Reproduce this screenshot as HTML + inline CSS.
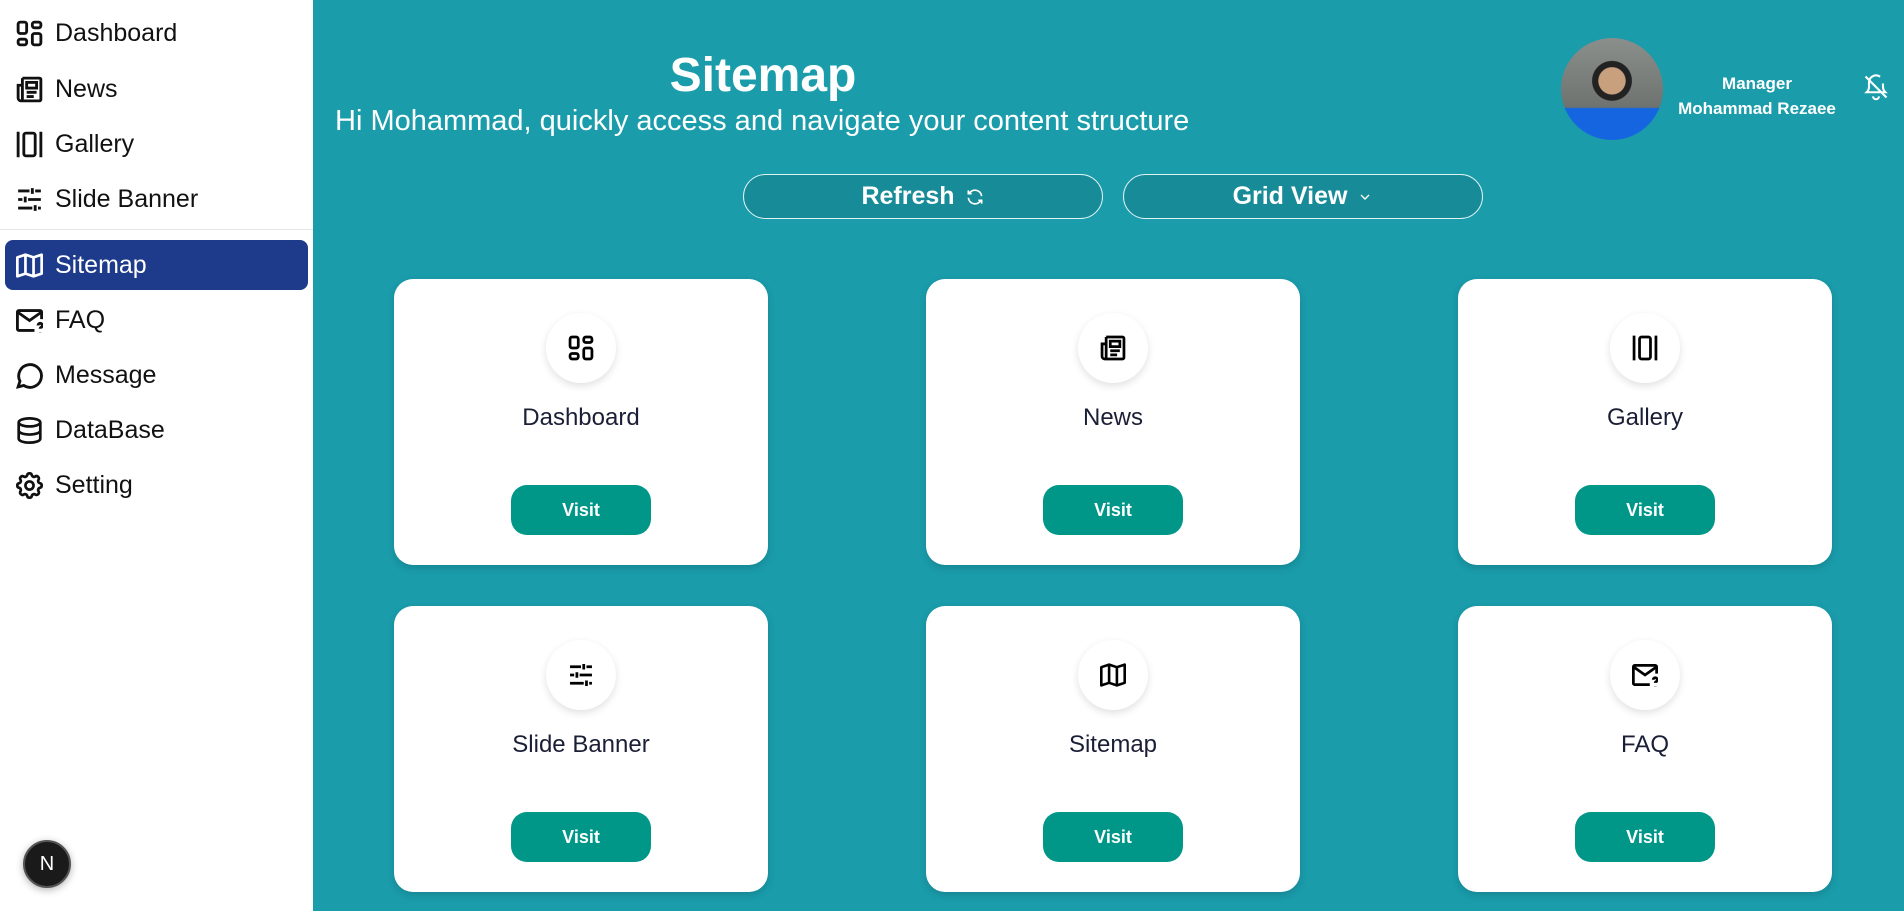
<!DOCTYPE html>
<html><head><meta charset="utf-8">
<style>
*{box-sizing:border-box;margin:0;padding:0}
body{width:1904px;height:911px;overflow:hidden;font-family:"Liberation Sans",sans-serif;background:#1a9cab;position:relative}
.side{position:absolute;left:0;top:0;width:313px;height:911px;background:#fff}
.item{position:absolute;left:5px;width:303px;height:50px;display:flex;align-items:center;padding-left:11px;font-size:25px;color:#111}
.item svg{width:27px;height:27px;margin-right:12px;flex:none}
.item.act{background:#1e3a8a;color:#fff;border-radius:8px}
.div{position:absolute;left:0;top:229px;width:313px;height:1px;background:#e5e5e5}
.nb{position:absolute;left:23px;top:840px;width:48px;height:48px;border-radius:50%;background:#1a1a1a;border:2px solid #555;color:#fff;font-size:20px;display:flex;align-items:center;justify-content:center;box-shadow:0 2px 8px rgba(0,0,0,.3)}
.h1{position:absolute;left:563px;width:400px;top:48px;text-align:center;color:#fff;font-size:48px;font-weight:bold}
.sub{position:absolute;left:335px;top:105px;color:#fff;font-size:29px}
.btn{position:absolute;top:174px;width:360px;height:45px;border:1px solid #e0f4f6;border-radius:23px;background:#188b98;color:#fff;font-size:25px;font-weight:bold;display:flex;align-items:center;justify-content:center;gap:10px}
.av{position:absolute;left:1561px;top:38px;width:102px;height:102px;border-radius:50%;background:radial-gradient(circle at 50% 42%,#c9a07e 0 17%,#222 18% 25%,transparent 26%),linear-gradient(#8a8f8c,#6e7370 68%,#1565e0 69%);overflow:hidden}
.mg{position:absolute;left:1650px;width:214px;text-align:center;color:#fff;font-size:17px;font-weight:bold}
.card{position:absolute;width:374px;height:286px;background:#fff;border-radius:19px;box-shadow:0 3px 8px rgba(0,0,0,.15)}
.ic{position:absolute;left:152px;top:34px;width:70px;height:70px;border-radius:50%;background:#fff;box-shadow:0 3px 8px rgba(0,0,0,.12);display:flex;align-items:center;justify-content:center}
.ic svg{width:26px;height:26px}
.t{position:absolute;top:125px;width:100%;text-align:center;font-size:24px;color:#1a1f36}
.v{position:absolute;left:117px;top:206px;width:140px;height:50px;border-radius:16px;background:#009688;color:#fff;font-size:18px;font-weight:bold;display:flex;align-items:center;justify-content:center}
</style></head><body>
<svg width="0" height="0" style="position:absolute">
<defs>
<g id="dash" fill="none" stroke="currentColor" stroke-width="2"><rect x="4" y="4" width="6" height="8" rx="1.5"/><rect x="14" y="4" width="6" height="4" rx="1.5"/><rect x="4" y="16" width="6" height="4" rx="1.5"/><rect x="14" y="12" width="6" height="8" rx="1.5"/></g>
<g id="news" fill="none" stroke="currentColor" stroke-width="2"><path d="M7 4h12a1 1 0 0 1 1 1v14a1 1 0 0 1-1 1H6a2 2 0 0 1-2-2V9h3M7 4v15a1 1 0 0 1-2 0"/><rect x="10" y="7" width="7" height="4"/><path d="M10 14h7M10 17h5"/></g>
<g id="gal" fill="none" stroke="currentColor" stroke-width="2"><path d="M4 3v18M20 3v18"/><rect x="8" y="4" width="8" height="16" rx="1.5"/></g>
<g id="slid" fill="none" stroke="currentColor" stroke-width="2"><path d="M4 6h8M16 6h4M14 4v4M4 12h3M11 12h9M9 10v4M4 18h10M18 18h2M16 16v4"/></g>
<g id="map" fill="none" stroke="currentColor" stroke-width="2" stroke-linejoin="round"><path d="M3 6l6-2 6 2 6-2v14l-6 2-6-2-6 2z M9 4v14M15 6v14"/></g>
<g id="faq" fill="none" stroke="currentColor" stroke-width="2"><path d="M20 11V6a1 1 0 0 0-1-1H4a1 1 0 0 0-1 1v12a1 1 0 0 0 1 1h11"/><path d="M3 6l8.5 6L20 6"/><path d="M17.5 15.5a1.5 1.5 0 1 1 2 1.4c-.4.2-.5.5-.5.9M19 20.5v.2"/></g>
<g id="msg" fill="none" stroke="currentColor" stroke-width="2"><path d="M4 20l1.3-4A8 8 0 1 1 8 19z"/></g>
<g id="db" fill="none" stroke="currentColor" stroke-width="2"><ellipse cx="12" cy="6" rx="8" ry="3"/><path d="M4 6v12c0 1.7 3.6 3 8 3s8-1.3 8-3V6M4 12c0 1.7 3.6 3 8 3s8-1.3 8-3"/></g>
<g id="set" fill="none" stroke="currentColor" stroke-width="2"><path d="M10.3 4.3c.4-1.8 3-1.8 3.4 0a1.7 1.7 0 0 0 2.6 1c1.5-.9 3.3.8 2.4 2.4a1.7 1.7 0 0 0 1 2.6c1.8.4 1.8 3 0 3.4a1.7 1.7 0 0 0-1 2.6c.9 1.5-.8 3.3-2.4 2.4a1.7 1.7 0 0 0-2.6 1c-.4 1.8-3 1.8-3.4 0a1.7 1.7 0 0 0-2.6-1c-1.5.9-3.3-.8-2.4-2.4a1.7 1.7 0 0 0-1-2.6c-1.8-.4-1.8-3 0-3.4a1.7 1.7 0 0 0 1-2.6c-.9-1.5.8-3.3 2.4-2.4a1.7 1.7 0 0 0 2.6-1z"/><circle cx="12" cy="12" r="3"/></g>
</defs></svg>
<div class="side">
<div class="item" style="top:8px"><svg viewBox="2.5 2.5 19 19"><use href="#dash"/></svg>Dashboard</div>
<div class="item" style="top:64px"><svg viewBox="2.5 2.5 19 19"><use href="#news"/></svg>News</div>
<div class="item" style="top:119px"><svg viewBox="2.5 2.5 19 19"><use href="#gal"/></svg>Gallery</div>
<div class="item" style="top:174px"><svg viewBox="2.5 2.5 19 19"><use href="#slid"/></svg>Slide Banner</div>
<div class="div"></div>
<div class="item act" style="top:240px"><svg viewBox="2 2.5 20 19"><use href="#map"/></svg>Sitemap</div>
<div class="item" style="top:295px"><svg viewBox="2 2.5 19 19"><use href="#faq"/></svg>FAQ</div>
<div class="item" style="top:350px"><svg viewBox="2.5 2.5 19 19"><use href="#msg"/></svg>Message</div>
<div class="item" style="top:405px"><svg viewBox="2.5 2 19 20"><use href="#db"/></svg>DataBase</div>
<div class="item" style="top:460px"><svg viewBox="2 2 20 20"><use href="#set"/></svg>Setting</div>
<div class="nb">N</div>
</div>
<div class="h1">Sitemap</div>
<div class="sub">Hi Mohammad, quickly access and navigate your content structure</div>
<div class="btn" style="left:743px">Refresh <svg width="20" height="20" viewBox="0 0 24 24" fill="none" stroke="#fff" stroke-width="2"><path d="M20 11A8 8 0 0 0 5 8M4 4v4h4M4 13a8 8 0 0 0 15 3M20 20v-4h-4"/></svg></div>
<div class="btn" style="left:1123px">Grid View <svg width="16" height="16" viewBox="0 0 24 24" fill="none" stroke="#fff" stroke-width="2"><path d="M6 9l6 6 6-6"/></svg></div>
<div class="av"></div>
<div class="mg" style="top:74px">Manager</div>
<div class="mg" style="top:99px">Mohammad Rezaee</div>
<svg style="position:absolute;left:1862px;top:73px" width="28" height="28" viewBox="0 0 24 24" fill="none" stroke="#fff" stroke-width="1.8"><path d="M9.5 20a2.5 2.5 0 0 0 5 0M6 8a6 6 0 0 1 9.5-4.8M18 9v3c0 2 1 3.5 2 4.5H8M6 8v4c0 2-1 3.5-2 4.5h4M3 3l18 18"/></svg>

<div class="card" style="left:394px;top:279px"><div class="ic"><svg viewBox="2.5 2.5 19 19"><use href="#dash"/></svg></div><div class="t">Dashboard</div><div class="v">Visit</div></div>
<div class="card" style="left:926px;top:279px"><div class="ic"><svg viewBox="2.5 2.5 19 19"><use href="#news"/></svg></div><div class="t">News</div><div class="v">Visit</div></div>
<div class="card" style="left:1458px;top:279px"><div class="ic"><svg viewBox="2.5 2.5 19 19"><use href="#gal"/></svg></div><div class="t">Gallery</div><div class="v">Visit</div></div>
<div class="card" style="left:394px;top:606px"><div class="ic"><svg viewBox="2.5 2.5 19 19"><use href="#slid"/></svg></div><div class="t">Slide Banner</div><div class="v">Visit</div></div>
<div class="card" style="left:926px;top:606px"><div class="ic"><svg viewBox="2 2.5 20 19"><use href="#map"/></svg></div><div class="t">Sitemap</div><div class="v">Visit</div></div>
<div class="card" style="left:1458px;top:606px"><div class="ic"><svg viewBox="2 2.5 19 19"><use href="#faq"/></svg></div><div class="t">FAQ</div><div class="v">Visit</div></div>
</body></html>
